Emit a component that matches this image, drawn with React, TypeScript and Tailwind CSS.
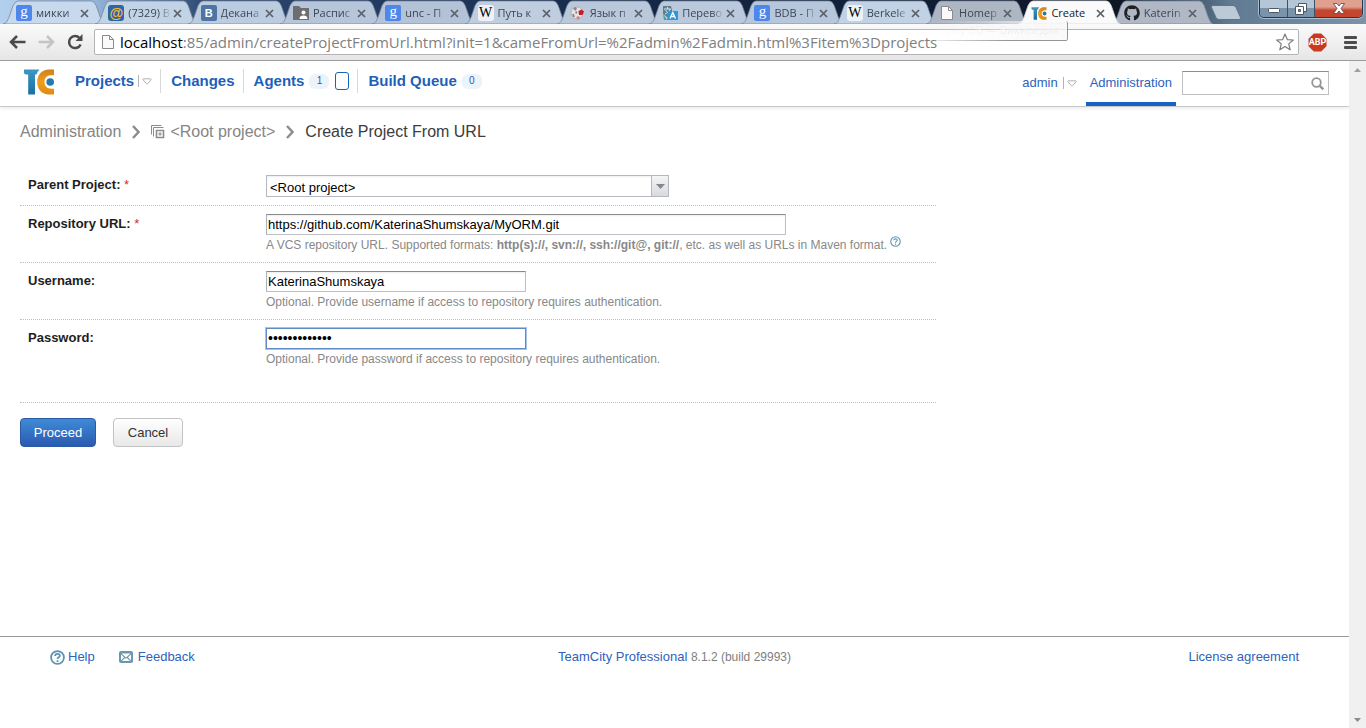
import React from "react";
import { FaGithub } from "react-icons/fa";

const PageIcon = () => (
  <svg viewBox="0 0 16 16" className="size-4 shrink-0" fill="#fafafa" stroke="#8b8b8b">
    <path d="M2.500 1.500h7l4 4v9h-11z" />
    <path d="M9.500 1.500v4h4" fill="none" />
  </svg>
);

const GoogleIcon = () => (
  <span className="flex size-4 shrink-0 items-center justify-center rounded-[2px] bg-[#4f86ec] pb-1 font-['Liberation_Serif',serif] text-[15px] leading-none text-white">
    g
  </span>
);

const MailIcon = () => (
  <span className="flex size-4 shrink-0 items-center justify-center rounded-[3px] bg-[#2d66a4] pb-px font-['Liberation_Sans',sans-serif] text-[14px] leading-none font-bold text-[#f5b544]">
    @
  </span>
);

const VkIcon = () => (
  <span className="flex size-4 shrink-0 items-center justify-center rounded-[2px] bg-[#4d75a3] font-['Liberation_Sans',sans-serif] text-[11px] leading-none font-bold text-white">
    B
  </span>
);

const WikiIcon = () => (
  <span className="flex size-4 shrink-0 items-center justify-center rounded-[3px] bg-[#eef1f5] font-['Liberation_Serif',serif] text-[14px] leading-none text-black">
    W
  </span>
);

const FolderIcon = () => (
  <svg viewBox="0 0 16 16" className="size-4 shrink-0">
    <path d="M0 1h6l2 2h8v12H0z" fill="#6d6e70" />
    <circle cx="10.5" cy="7.5" r="2" fill="#fff" />
    <path d="M6.500 14c0-2.500 1.500-3.500 4-3.500s4 1 4 3.500z" fill="#fff" />
  </svg>
);

const BallIcon = () => (
  <svg viewBox="0 0 16 16" className="size-4 shrink-0">
    <circle cx="7" cy="8" r="6" fill="#e9e4e4" stroke="#a9a3a8" strokeWidth=".7" />
    <path d="M8.500 6l3-1.500 2.500 2-1.500 3.500-3.500 0z" fill="#c3202f" />
    <path d="M3 3l3-1 1 2-2 2zM2 9l2 0 1 3-2 0zM6 6l1.500 1-1 2-1.500-1z" fill="#8d8890" />
    <path d="M6 12l3-1 1 2-2 2z" fill="#d98087" />
  </svg>
);

const TranslateIcon = () => (
  <svg viewBox="0 0 16 16" className="size-4 shrink-0">
    <path d="M1 1h8l2 9-6 2-4-3z" fill="#5f7f8e" />
    <path d="M2 4h7M5.500 2v2M8 4c-1 3-3 4-5 5M3.500 5c1 2 3 3 4.500 4" stroke="#d7e6ec" fill="none" />
    <path d="M6 6h10v9H5z" fill="#2b98dc" />
    <path d="M8 13.500l2.800-6 2.700 6M9 11.500h3.600" stroke="#fff" strokeWidth="1.300" fill="none" />
    <path d="M1 9l4 6H2z" fill="#3aa5a0" />
  </svg>
);

const TcLogo = ({ className }: { className: string }) => (
  <svg viewBox="0 0 30 26" className={className} aria-hidden="true">
    <defs>
      <linearGradient id="tcBlue" x1="0" y1="0" x2="0" y2="1">
        <stop offset="0" stopColor="#3a97c2" />
        <stop offset="1" stopColor="#1d6ea3" />
      </linearGradient>
      <linearGradient id="tcOrange" x1="0" y1="0" x2="0" y2="1">
        <stop offset="0" stopColor="#d0801c" />
        <stop offset=".5" stopColor="#f09d1c" />
        <stop offset="1" stopColor="#e08a0d" />
      </linearGradient>
    </defs>
    <path d="M0 .5h15.500q-2 2-3 5H11v20H4.200v-20H2Q0 5.500 0 3.500z" fill="url(#tcBlue)" />
    <path
      d="M30 .5v5.800h-2.500c-4.500 0-7 2.700-7 6.700s2.500 6.700 7 6.700H30v5.800h-5C18 25.500 13.200 20.500 13.200 13S18 .5 25 .5z"
      fill="url(#tcOrange)"
    />
    <circle cx="26.2" cy="13" r="3.800" fill="#257aad" />
  </svg>
);

const TcSmall = () => <TcLogo className="h-[13px] w-4 shrink-0" />;
const GithubIcon = () => <FaGithub className="size-4 shrink-0 text-[#1f2023]" />;

const tabs: { icon: React.ComponentType; title: string; fill: string; active?: boolean }[] = [
  { icon: GoogleIcon, title: "микки", fill: "#c8d9ed" },
  { icon: MailIcon, title: "(7329) В", fill: "#c3d3e6" },
  { icon: VkIcon, title: "Декана", fill: "#bccce0" },
  { icon: FolderIcon, title: "Распис", fill: "#b6c5da" },
  { icon: GoogleIcon, title: "unc - П", fill: "#b3c2d6" },
  { icon: WikiIcon, title: "Путь к", fill: "#bfcddf" },
  { icon: BallIcon, title: "Язык п", fill: "#bac8db" },
  { icon: TranslateIcon, title: "Перево", fill: "#bac9dc" },
  { icon: GoogleIcon, title: "BDB - П", fill: "#b7c7db" },
  { icon: WikiIcon, title: "Berkele", fill: "#c2d2e5" },
  { icon: PageIcon, title: "Homep", fill: "#adb7c4" },
  { icon: TcSmall, title: "Create", fill: "#fafafa", active: true },
  { icon: GithubIcon, title: "Katerin", fill: "#afb8c4" },
];

function Tab({ tab }: { tab: (typeof tabs)[number] }) {
  const Icon = tab.icon;
  return (
    <div className={tab.active ? "relative z-10 h-full" : "relative h-full"}>
      <svg
        viewBox="0 0 102 25"
        preserveAspectRatio="none"
        className="absolute inset-y-0 -left-[5px] h-full w-[calc(100%+10px)]"
        aria-hidden="true"
      >
        <path
          d="M0 25C4 24 4 22 6 18L10 6Q12 1 15 1H88Q91 1 93 6L97 18C99 22 99 24 102 25z"
          fill={tab.fill}
          stroke={tab.active ? "#d5d9de" : "#76859a"}
          strokeWidth=".8"
        />
      </svg>
      <div className="relative flex h-full items-center pt-[2px] pr-[11px] pl-2">
        <Icon />
        <a
          href="#"
          className={
            "ml-1 min-w-0 flex-1 text-[11px] leading-4 whitespace-nowrap " +
            (tab.active ? "text-[#1a1a1a]" : "mask-r-from-75% mask-r-to-105% text-[#3c4654]")
          }
        >
          {tab.title}
        </a>
        <button type="button" aria-label="Close tab" className="ml-1 shrink-0">
          <svg viewBox="0 0 9 9" className="size-[9px]" stroke="#5b6068" strokeWidth="1.700">
            <path d="M1 1l7 7M8 1l-7 7" />
          </svg>
        </button>
      </div>
    </div>
  );
}

function BrowserChrome() {
  return (
    <header className="relative shrink-0 font-['Open_Sans','Noto_Sans',sans-serif]">
      <div className="flex h-6 items-start bg-[linear-gradient(90deg,#b4d0ee_0%,#93b3d8_7%,#2c4870_15%,#15294a_45%,#0d1624_82%,#5f7a92_90%,#7b94aa_100%)] pl-2">
        <nav aria-label="Tabs" className="grid h-full flex-1 grid-cols-13">
          {tabs.map((t, i) => (
            <Tab key={i} tab={t} />
          ))}
        </nav>
        <div className="flex w-[158px] shrink-0 items-start justify-between pr-[3px] pl-[2px]">
          <button type="button" aria-label="New tab" className="mt-[5px]">
            <svg viewBox="0 0 32 15" className="h-[15px] w-8">
              <path
                d="M3 .5h20q2 0 3 2l4.500 10q.5 2-1.500 2H9q-2 0-3-2L1.500 2.500Q1 .5 3 .5z"
                fill="#bcc9d6"
                stroke="#5f7488"
              />
            </svg>
          </button>
          <div className="flex h-[18px] w-[104px] overflow-hidden rounded-b-[5px] border border-t-0 border-[#26384a] shadow-[0_0_0_1px_#a9bccd]">
            <button
              type="button"
              aria-label="Minimize"
              className="flex flex-1 items-center justify-center border-r border-[#3d5266] bg-linear-to-b from-[#b5c6d6] from-50% to-[#7b93aa] to-50%"
            >
              <svg viewBox="0 0 12 5" className="mt-1 h-[5px] w-3">
                <rect x=".5" y=".5" width="11" height="4" rx="1" fill="#fff" stroke="#4c5866" />
              </svg>
            </button>
            <button
              type="button"
              aria-label="Restore"
              className="flex w-[27px] items-center justify-center border-r border-[#3d5266] bg-linear-to-b from-[#b5c6d6] from-50% to-[#7b93aa] to-50%"
            >
              <svg viewBox="0 0 12 12" className="size-3" fill="#fff" stroke="#4c5866">
                <path d="M3.500.5h8v8h-8z" />
                <path d="M.5 3.500h8v8h-8z" />
                <path d="M3.500 6.500h2v2h-2z" fill="#8ba0b5" />
              </svg>
            </button>
            <button
              type="button"
              aria-label="Close"
              className="flex w-[47px] items-center justify-center bg-linear-to-b from-[#e0a090] from-40% to-[#c4452e] to-60%"
            >
              <svg viewBox="0 0 12 11" className="h-[11px] w-3">
                <path
                  d="M.5.5h3.500l2 2.500L8 .5h3.500L8 5.500l3.500 5H8L6 8l-2 2.500H.5L4 5.500z"
                  fill="#fff"
                  stroke="#5b4448"
                  strokeWidth=".8"
                />
              </svg>
            </button>
          </div>
        </div>
      </div>

      <div className="flex h-[37px] items-center border-b border-[#9c9c9e] bg-linear-to-b from-[#fafafa] to-[#e6e6e6] pr-[9px] pl-[9px]">
        <button type="button" aria-label="Back">
          <svg viewBox="0 0 17 14" className="h-[14px] w-[17px]" stroke="#4a4a4a" strokeWidth="2.500" fill="none">
            <path d="M8 1L2 7l6 6M2 7h14.500" />
          </svg>
        </button>
        <button type="button" aria-label="Forward" className="ml-3">
          <svg viewBox="0 0 17 14" className="h-[14px] w-[17px]" stroke="#c4c4c4" strokeWidth="2.500" fill="none">
            <path d="M9 1l6 6-6 6M15 7H.5" />
          </svg>
        </button>
        <button type="button" aria-label="Reload" className="ml-3">
          <svg viewBox="0 0 17 16" className="h-4 w-[17px]">
            <path d="M13.600 10.500A6 6 0 1 1 12.500 4" fill="none" stroke="#4a4a4a" strokeWidth="2.500" />
            <path d="M15.500 0v7H8.500z" fill="#4a4a4a" />
          </svg>
        </button>
        <div className="ml-[10px] flex h-[26px] min-w-0 flex-1 items-center rounded-[2px] border border-[#b4b4b6] bg-white pr-[4px] pl-[5px]">
          <PageIcon />
          <div className="ml-1 min-w-0 flex-1 overflow-hidden text-[15px] leading-5 whitespace-nowrap text-[#808080]">
            <span className="text-black">localhost</span>
            :85/admin/createProjectFromUrl.html?init=1&amp;cameFromUrl=%2Fadmin%2Fadmin.html%3Fitem%3Dprojects
          </div>
          <button type="button" aria-label="Bookmark this page">
            <svg viewBox="0 0 18 18" className="size-[18px]" fill="#fff" stroke="#7b7b7b" strokeWidth="1.200">
              <path
                d="M9 1l2.300 5.600 6 .4-4.600 3.900 1.500 5.900L9 13.600l-5.200 3.200 1.500-5.900L.7 7l6-.4z"
                strokeLinejoin="round"
              />
            </svg>
          </button>
        </div>
        <button
          type="button"
          aria-label="Adblock Plus"
          className="relative ml-[9px] flex size-[19px] items-center justify-center"
        >
          <svg viewBox="0 0 19 19" className="absolute inset-0 size-full">
            <path d="M5.800.5h7.400l5.300 5.300v7.400l-5.300 5.300H5.800L.5 13.200V5.800z" fill="#cb3a20" />
          </svg>
          <span className="relative font-['Roboto',sans-serif] text-[9px] leading-none font-bold text-white">ABP</span>
        </button>
        <button type="button" aria-label="Menu" className="ml-[17px]">
          <svg viewBox="0 0 13 13" className="size-[13px]" fill="#4c4c4c">
            <rect width="13" height="3" rx="1" />
            <rect y="5" width="13" height="3" rx="1" />
            <rect y="10" width="13" height="3" rx="1" />
          </svg>
        </button>
      </div>

      <div className="pointer-events-none absolute top-[21px] right-[298px] z-20 h-5 w-[153px] rounded-[2px] border-r border-b border-[#7c7c7c]/80 bg-linear-to-r from-white/10 to-[#f8f8f8]/80 mask-l-from-40% mask-l-to-100% px-[6px] text-[11px] leading-[18px] whitespace-nowrap text-[#efefef] shadow-[1px_1px_2px_rgba(0,0,0,0.4)]">
        Berkeley DB — Википедия
      </div>
    </header>
  );
}

const MenuArrow = ({ label }: { label: string }) => (
  <button type="button" aria-label={label} className="flex items-center gap-[3px]">
    <span className="h-3 w-px bg-[#b5b5b5]" />
    <svg viewBox="0 0 10 7" className="h-[7px] w-[10px]" fill="#fff" stroke="#b0b0b0">
      <path d="M.8 1.500Q.8.800 1.500.8h7q.8 0 .7.800L5.600 5.800q-.6.500-1.200 0z" />
    </svg>
  </button>
);

const Count = ({ n }: { n: number }) => (
  <span className="ml-[5px] flex h-[15px] w-5 items-center justify-center rounded-[6px] bg-[#edf3fb] text-[10px] font-normal text-[#1f5cb0]">
    {n}
  </span>
);

function SiteHeader() {
  return (
    <div className="flex h-[46px] shrink-0 justify-between border-b border-[#c8c8c8] pr-5 pl-6 shadow-[0_2px_3px_#eeeeee]">
      <nav className="flex items-start pt-2">
        <a href="#" aria-label="TeamCity">
          <TcLogo className="h-[26px] w-[30px]" />
        </a>
        <ul className="ml-[11px] flex text-[15px] leading-6 font-bold text-[#1e5fb8] *:flex *:h-6 *:items-center *:pr-2 *:pl-[10px]">
          <li className="gap-[4px]">
            <a href="#">Projects</a>
            <MenuArrow label="Show projects" />
          </li>
          <li className="border-l border-[#d8d8d8]">
            <a href="#">Changes</a>
          </li>
          <li className="border-l border-[#d8d8d8]">
            <a href="#">Agents</a>
            <Count n={1} />
            <span className="ml-[6px] h-[18px] w-[14px] rounded-[3px] border border-[#1465b4]" />
          </li>
          <li className="border-l border-[#d8d8d8]">
            <a href="#">Build Queue</a>
            <Count n={0} />
          </li>
        </ul>
      </nav>
      <div className="flex items-start text-[13px] leading-4 text-[#2f62bb]">
        <div className="mt-[14px] flex items-center gap-[5px]">
          <a href="#">admin</a>
          <MenuArrow label="User menu" />
        </div>
        <a href="#" className="ml-[9px] h-[45px] border-b-4 border-[#1564c4] px-1 pt-[14px]">
          Administration
        </a>
        <label className="mt-[10px] ml-[6px] flex h-6 w-[147px] items-center border border-t-[#8e8e8e] border-r-[#c0c0c0] border-b-[#c0c0c0] border-l-[#c0c0c0] bg-white pr-1">
          <input type="text" aria-label="Search" className="min-w-0 flex-1 bg-transparent px-1 outline-none" />
          <svg viewBox="0 0 13 13" className="size-[13px]" fill="none" stroke="#959595" strokeWidth="1.800">
            <circle cx="5.500" cy="5.500" r="4.300" />
            <path d="M8.800 8.800l3.500 3.500" strokeWidth="2.400" />
          </svg>
        </label>
      </div>
    </div>
  );
}

const Chevron = () => (
  <svg viewBox="0 0 8 14" className="mx-[11px] h-[14px] w-2" fill="none" stroke="#8c8c8c" strokeWidth="2.400">
    <path d="M1 1l5.500 6L1 13" />
  </svg>
);

function HelpIcon({ className, width }: { className: string; width: number }) {
  return (
    <svg viewBox="0 0 14 14" className={className} fill="none" stroke="#5f93b2" strokeWidth={width}>
      <circle cx="7" cy="7" r="6" />
      <path d="M4.800 5.500C4.800 3 9.200 3 9.200 5.300 9.200 6.800 7 6.800 7 8.500M7 9.600v1.600" />
    </svg>
  );
}

const rowClass = "flex items-start border-b border-dotted border-[#bfbfbf] px-2 pt-2";
const labelClass = "w-[238px] shrink-0 pt-px text-[13px] leading-[18px] font-bold text-[#1e1e1e]";
const fieldClass =
  "block h-[21px] border border-t-[#8a8a8a] border-r-[#c0c0c8] border-b-[#c0c0c8] border-l-[#b0b0b8] bg-white px-px text-[13px] text-black shadow-[inset_0_1px_2px_#eeeeee] outline-none";
const noteClass = "mt-px block text-[12px] leading-[18px] text-[#888888]";

function ProjectForm() {
  return (
    <form className="mt-[25px] ml-5 w-full max-w-[916px] pb-5" onSubmit={(e) => e.preventDefault()}>
      <div className={rowClass + " pb-2"}>
        <label htmlFor="parent" className={labelClass}>
          Parent Project: <span className="font-normal text-[#d03030]">*</span>
        </label>
        <div className="relative">
          <select
            id="parent"
            className="block h-[22px] w-[403px] appearance-none border border-[#b5b8c0] bg-white pt-[2px] pr-5 pl-[3px] text-[13px] text-black shadow-[inset_0_1px_2px_#eeeeee] outline-none"
          >
            <option>&lt;Root project&gt;</option>
          </select>
          <span className="pointer-events-none absolute inset-y-px right-px flex w-[17px] items-center justify-center border-l border-[#b5b8c0] bg-linear-to-b from-[#f4f4f6] to-[#d9dae0]">
            <svg viewBox="0 0 9 5" className="h-[5px] w-[9px]" fill="#85868e">
              <path d="M0 0h9L4.500 5z" />
            </svg>
          </span>
        </div>
      </div>

      <div className={rowClass + " pb-2"}>
        <label htmlFor="url" className={labelClass}>
          Repository URL: <span className="font-normal text-[#d03030]">*</span>
        </label>
        <div>
          <input
            id="url"
            type="text"
            defaultValue="https://github.com/KaterinaShumskaya/MyORM.git"
            className={fieldClass + " w-[520px]"}
          />
          <span className={noteClass + " flex! items-start"}>
            <span>
              A VCS repository URL. Supported formats: <b>http(s)://, svn://, ssh://git@, git://</b>, etc. as well as URLs in
              Maven format.
            </span>
            <a href="#" aria-label="Help" className="ml-[3px]">
              <HelpIcon className="size-[11px]" width={1.4} />
            </a>
          </span>
        </div>
      </div>

      <div className={rowClass + " pb-2"}>
        <label htmlFor="username" className={labelClass}>
          Username:
        </label>
        <div>
          <input id="username" type="text" defaultValue="KaterinaShumskaya" className={fieldClass + " w-[260px]"} />
          <span className={noteClass}>Optional. Provide username if access to repository requires authentication.</span>
        </div>
      </div>

      <div className={rowClass + " pb-[34px]"}>
        <label htmlFor="password" className={labelClass}>
          Password:
        </label>
        <div>
          <input
            id="password"
            type="password"
            defaultValue="shumskaya1234"
            className="block h-[21px] w-[260px] border border-[#5f8cc8] bg-white px-px text-[14px] text-black shadow-[0_0_0_1px_#a3c3ee] outline-none"
          />
          <span className={noteClass}>Optional. Provide password if access to repository requires authentication.</span>
        </div>
      </div>

      <div className="mt-[15px] flex gap-[17px] text-[13px] leading-4">
        <button
          type="submit"
          className="h-[29px] w-[76px] rounded-[4px] border border-[#2a5ba4] bg-linear-to-b from-[#3f8bd8] to-[#2b5ab0] text-white"
        >
          Proceed
        </button>
        <button
          type="button"
          className="h-[29px] w-[70px] rounded-[4px] border border-[#c2c2c2] bg-linear-to-b from-white to-[#e8e8e8] text-[#333333]"
        >
          Cancel
        </button>
      </div>
    </form>
  );
}

export default function App() {
  return (
    <div className="flex min-h-screen flex-col bg-white">
      <BrowserChrome />
      <div className="flex flex-1">
        <div className="flex min-w-0 flex-1 flex-col font-['Liberation_Sans',Arial,sans-serif]">
          <SiteHeader />
          <nav
            aria-label="Breadcrumb"
            className="mt-[15px] ml-5 flex items-center text-[16px] leading-5 text-[#858585]"
          >
            <a href="#">Administration</a>
            <Chevron />
            <svg viewBox="0 0 14 14" className="mr-[5px] size-[14px]" fill="none" stroke="#8c8c8c">
              <path d="M.5 9.500V.5h10M2.500 11.500V2.500h10" />
              <path d="M5.500 5.500h7v7h-7z" strokeWidth="1.600" />
              <path d="M8 8h2v2H8z" />
            </svg>
            <a href="#">&lt;Root project&gt;</a>
            <Chevron />
            <h1 className="text-[#3c3c3c]">Create Project From URL</h1>
          </nav>
          <main>
            <ProjectForm />
          </main>
          <footer className="mt-auto grid h-[92px] grid-cols-3 border-t border-[#9a9a9a] px-[50px] pt-3 text-[13px] leading-4 text-[#2f62bb]">
            <div className="flex h-4 items-center">
              <a href="#" className="flex items-center gap-[3px]">
                <HelpIcon className="size-[15px]" width={1.7} />
                Help
              </a>
              <a href="#" className="ml-6 flex items-center gap-[5px]">
                <svg viewBox="0 0 14 12" className="h-3 w-[14px]">
                  <rect width="14" height="12" rx="2" fill="#6c98ae" />
                  <path d="M2.500 2.500h9L7 6.500zM2 3.500v6l3-3.200zM12 3.500v6L9 6.300zM3 10l3-3 1 .8L8 7l3 3z" fill="#fff" />
                </svg>
                Feedback
              </a>
            </div>
            <div className="text-center whitespace-nowrap">
              <a href="#">TeamCity Professional</a> <span className="text-[12px] text-[#808080]">8.1.2 (build 29993)</span>
            </div>
            <a href="#" className="justify-self-end">
              License agreement
            </a>
          </footer>
        </div>
        <div className="flex w-[17px] shrink-0 flex-col items-center justify-between bg-[#f0f0f0] pt-[7px] pb-[6px]">
          <svg viewBox="0 0 7 4" className="h-1 w-[7px]" fill="#a0a0a0">
            <path d="M0 4h7L3.500 0z" />
          </svg>
          <svg viewBox="0 0 7 4" className="h-1 w-[7px]" fill="#8c8c8c">
            <path d="M0 0h7L3.500 4z" />
          </svg>
        </div>
      </div>
    </div>
  );
}
